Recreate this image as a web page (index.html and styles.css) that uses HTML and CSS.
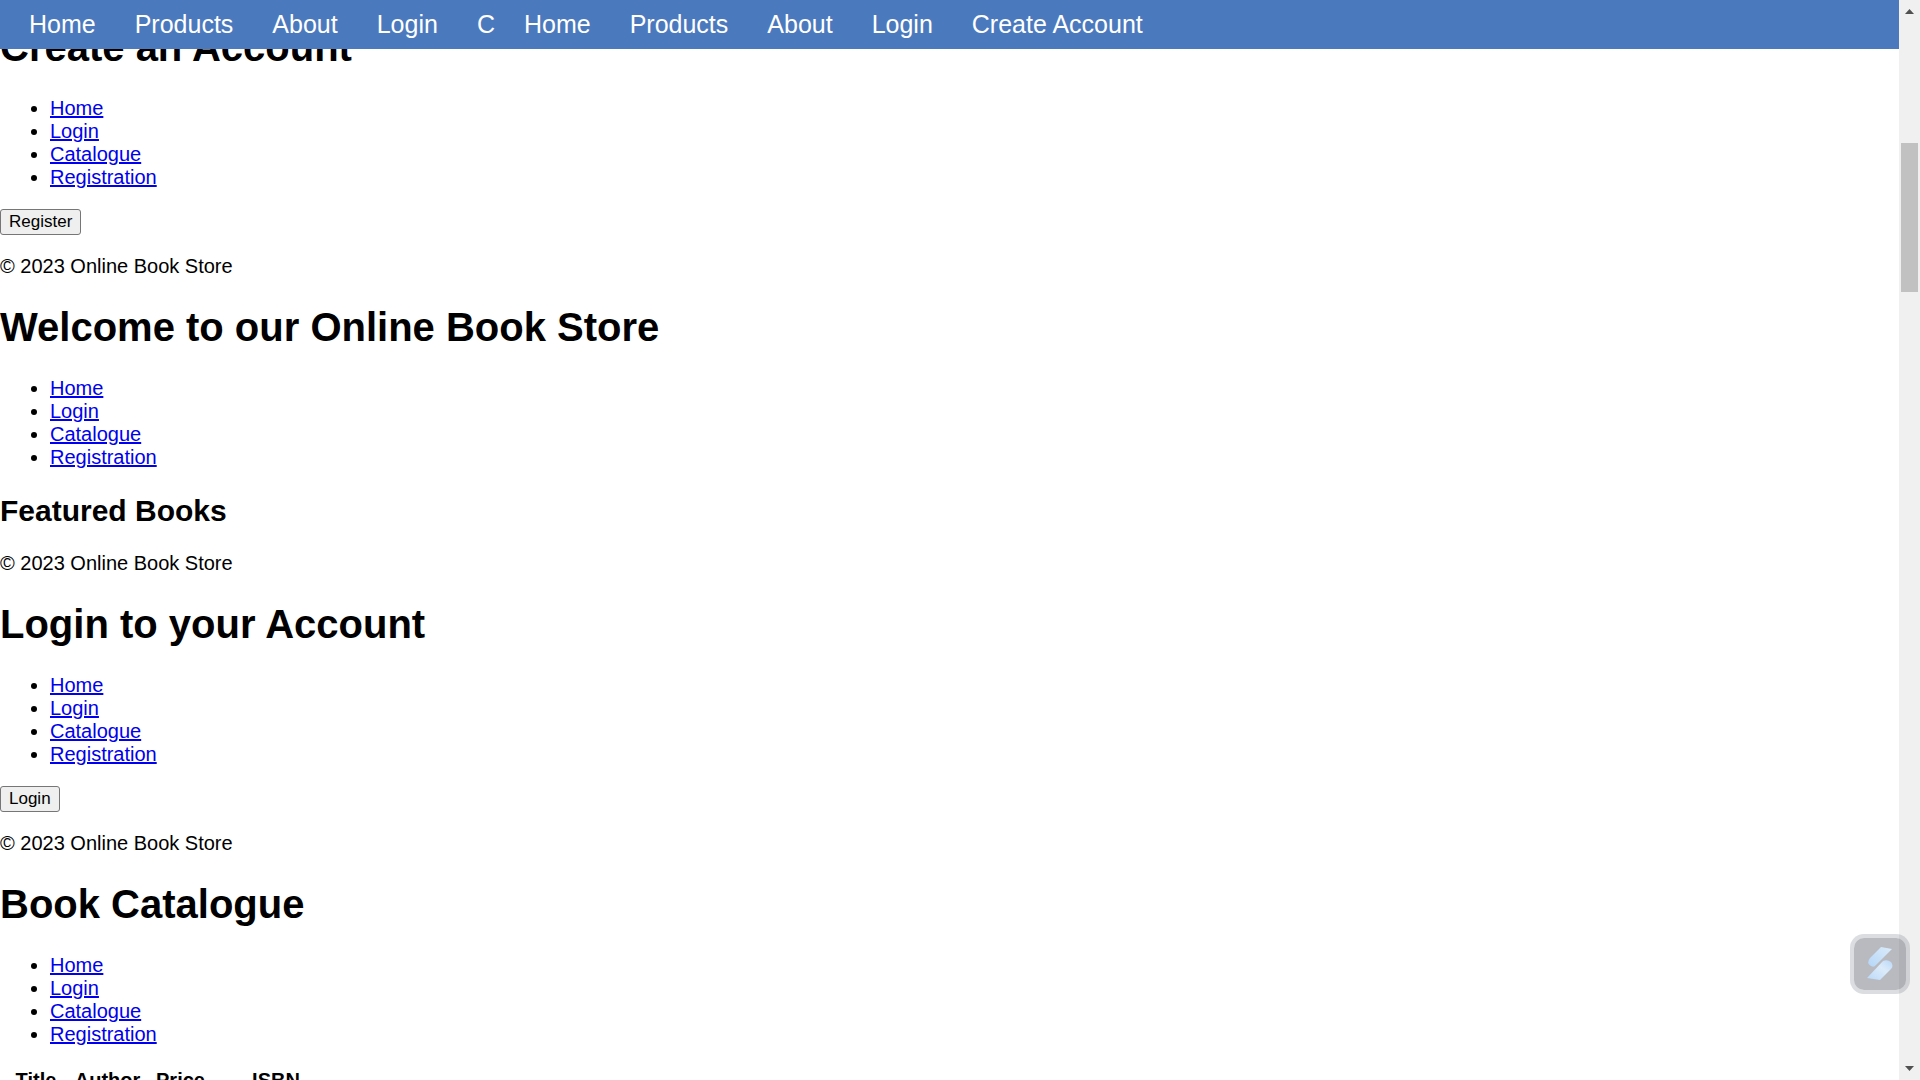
FILE: index.html
```html
<!DOCTYPE html>
<html lang="en">
<head>
<meta charset="utf-8">
<title>Online Book Store</title>
<link rel="stylesheet" href="styles.css">
</head>
<body>
<div class="viewport">
  <div class="page">
    <nav class="topbar">
      <div class="menu">
        <a href="#">Home</a>
        <a href="#">Products</a>
        <a href="#">About</a>
        <a href="#">Login</a>
        <a href="#">C</a>
      </div>
      <div class="menu">
        <a href="#">Home</a>
        <a href="#">Products</a>
        <a href="#">About</a>
        <a href="#">Login</a>
        <a href="#">Create Account</a>
      </div>
    </nav>
    <main>
      <section>
        <h1>Create an Account</h1>
        <ul>
          <li><a href="#">Home</a></li>
          <li><a href="#">Login</a></li>
          <li><a href="#">Catalogue</a></li>
          <li><a href="#">Registration</a></li>
        </ul>
        <form><button type="button">Register</button></form>
        <p>© 2023 Online Book Store</p>
      </section>
      <section>
        <h1>Welcome to our Online Book Store</h1>
        <ul>
          <li><a href="#">Home</a></li>
          <li><a href="#">Login</a></li>
          <li><a href="#">Catalogue</a></li>
          <li><a href="#">Registration</a></li>
        </ul>
        <h2>Featured Books</h2>
        <p>© 2023 Online Book Store</p>
      </section>
      <section>
        <h1>Login to your Account</h1>
        <ul>
          <li><a href="#">Home</a></li>
          <li><a href="#">Login</a></li>
          <li><a href="#">Catalogue</a></li>
          <li><a href="#">Registration</a></li>
        </ul>
        <form><button type="button">Login</button></form>
        <p>© 2023 Online Book Store</p>
      </section>
      <section>
        <h1>Book Catalogue</h1>
        <ul>
          <li><a href="#">Home</a></li>
          <li><a href="#">Login</a></li>
          <li><a href="#">Catalogue</a></li>
          <li><a href="#">Registration</a></li>
        </ul>
        <table>
          <thead>
            <tr>
              <th scope="col" class="title">Title</th>
              <th scope="col" class="author">Author</th>
              <th scope="col" class="price">Price</th>
              <th scope="col" class="isbn">ISBN</th>
            </tr>
          </thead>
        </table>
      </section>
    </main>
  </div>
  <div class="scrollbar" aria-hidden="true">
    <svg class="arrow" viewBox="0 0 9 5"><path d="M4.500 0L9 5H0Z"/></svg>
    <div class="track"><div class="thumb"></div></div>
    <svg class="arrow" viewBox="0 0 9 5"><path d="M0 0H9L4.500 5Z"/></svg>
  </div>
</div>
<button type="button" class="assistant" aria-label="Open assistant">
  <svg viewBox="0 0 52 52" aria-hidden="true">
    <defs>
      <linearGradient id="upper" x1="1" y1="0" x2="0" y2="1"><stop offset="0" stop-color="#dcecfa"/><stop offset="1" stop-color="#b5d6f8"/></linearGradient>
      <linearGradient id="lower" x1="1" y1="0" x2="0" y2="1"><stop offset="0" stop-color="#b9d8f8"/><stop offset=".4" stop-color="#dcebfa"/><stop offset="1" stop-color="#bad9f8"/></linearGradient>
    </defs>
    <path fill="url(#upper)" d="M27 9L38 11L22 27Q20 30 17 28Q12 25 16 20Z"/>
    <path fill="url(#lower)" d="M13 40L29 23Q33 21 37 24Q40 28 37 31L26 42Z"/>
  </svg>
</button>
</body>
</html>
```
FILE: styles.css
```css
* {
  box-sizing: border-box;
}

body {
  margin: 0;
  background: #fff;
  color: #000;
  font-family: "Liberation Sans", Arial, sans-serif;
  font-size: 20px;
  line-height: 23px;
}

.viewport {
  display: flex;
  height: 100vh;
  overflow: hidden;
}

.page {
  position: relative;
  flex: 1;
  min-width: 0;
  overflow: hidden;
}

/* Fixed navigation, drawn over the scrolled content */
.topbar {
  position: absolute;
  inset: 0 0 auto 0;
  display: flex;
  padding: 10px 0;
  background: #4b79be;
  font-size: 25px;
  line-height: 29px;
}

.menu {
  display: flex;
  gap: 39px;
  padding-left: 29px;
}

.menu a {
  color: #fff;
  text-decoration: none;
}

main {
  padding-top: 25px;
}

h1 {
  margin: 27px 0;
  font-size: 40px;
  line-height: 45px;
}

section:first-child h1 {
  margin-top: 0;
}

h2 {
  margin: 25px 0;
  font-size: 30px;
  line-height: 33px;
}

ul {
  margin: 20px 0;
  padding-left: 50px;
}

li a {
  color: #0000ee;
}

p {
  margin: 20px 0;
}

form {
  display: flex;
}

form button {
  padding: 1px 8px;
  border: 1px solid #767676;
  border-radius: 3px;
  background: #efefef;
  color: #000;
  font-family: inherit;
  font-size: 17px;
  line-height: 22px;
}

table {
  border-spacing: 2px;
}

th {
  padding: 1px 0;
  text-align: center;
}

.title {
  min-width: 68px;
}

.author,
.price {
  min-width: 71px;
}

.isbn {
  min-width: 116px;
}

.scrollbar {
  display: flex;
  flex-direction: column;
  align-items: center;
  width: 21px;
  padding: 9px 2px;
  background: #f0f0f0;
}

.arrow {
  width: 9px;
  height: 5px;
  fill: #505050;
}

.track {
  flex: 1;
  align-self: stretch;
  padding-top: 129px;
}

.thumb {
  height: 149px;
  background: #c1c1c1;
}

/* Floating extension button */
.assistant {
  position: fixed;
  right: 10px;
  bottom: 86px;
  width: 60px;
  height: 60px;
  padding: 0;
  border: 4px solid rgba(80, 84, 100, .2);
  border-radius: 14px;
  background: rgba(80, 82, 94, .4);
  background-clip: padding-box;
}

.assistant svg {
  display: block;
  width: 52px;
  height: 52px;
}
```
